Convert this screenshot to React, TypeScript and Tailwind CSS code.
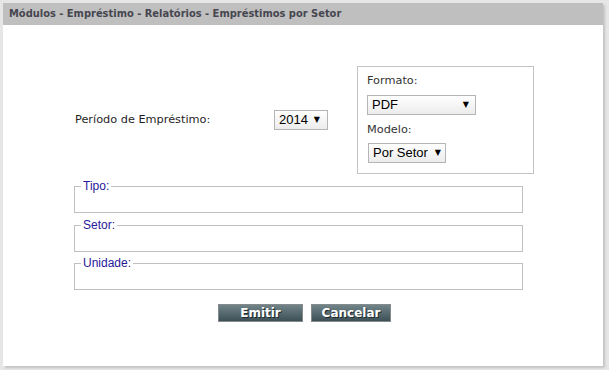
import React from "react";

const Arrow = () => (
  <span className="text-[8px] leading-none text-black" style={{ fontFamily: "'DejaVu Sans', sans-serif" }}>
    ▼
  </span>
);

function Select({ value, w, cls }: { value: string; w: string; cls?: string }) {
  return (
    <div
      className={`${w} h-[20px] border border-[#b5b5b5] bg-gradient-to-b from-white to-[#ececec] flex items-center justify-between pl-[4px] text-[13px] text-black ${cls ?? ""}`}
      style={{ fontFamily: "'Liberation Sans', Arial, sans-serif" }}
    >
      <span>{value}</span>
      <Arrow />
    </div>
  );
}

function Group({ label, cls }: { label: string; cls?: string }) {
  return (
    <fieldset className={`w-[449px] border border-[#c0c0c0] ml-[71px] ${cls ?? ""}`}>
      <legend
        className="ml-[6px] px-[2px] text-[12px] leading-[14px] text-[#26189a]"
        style={{ fontFamily: "'Liberation Sans', Arial, sans-serif" }}
      >
        {label}
      </legend>
      <div className="h-[19px]" />
    </fieldset>
  );
}

export default function App() {
  return (
    <div className="w-[609px] h-[370px] bg-[#e6e6e6] pt-[3px] pl-[3px]">
      <div className="w-[600px] h-[363px] bg-white shadow-[2px_2px_2px_#c4c4c4]">
        <div className="h-[22px] bg-[#bfbfbf] pl-[6px] flex items-center">
          <span
            className="text-[11px] font-bold text-[#464650]"
            style={{ fontFamily: "'DejaVu Sans', Tahoma, sans-serif", fontStretch: "condensed" }}
          >
            Módulos - Empréstimo - Relatórios - Empréstimos por Setor
          </span>
        </div>

        <div style={{ fontFamily: "'DejaVu Sans', Verdana, sans-serif" }}>
          <div className="mt-[41px] flex items-center pl-[72px]">
            <div className="w-[199px] text-[11.3px] text-[#1e1e1e]">Período de Empréstimo:</div>
            <Select value="2014" w="w-[54px]" cls="pr-[7px]" />
            <div className="ml-[29px] w-[177px] h-[108px] border border-[#c4c4c4] pl-[9px] pt-[6px]">
              <div className="text-[11.3px] leading-[16px] text-[#333]">Formato:</div>
              <Select value="PDF" w="w-[109px]" cls="mt-[6px] pr-[6px]" />
              <div className="mt-[7px] text-[11.3px] leading-[16px] text-[#333]">Modelo:</div>
              <Select value="Por Setor" w="w-[78px]" cls="mt-[5px] ml-[1px] pr-[4px]" />
            </div>
          </div>

          <Group label="Tipo:" cls="mt-[5px]" />
          <Group label="Setor:" cls="mt-[5px]" />
          <Group label="Unidade:" cls="mt-[4px]" />

          <div className="mt-[14px] flex justify-center gap-[8px] pl-[3px]">
            <button
              className="w-[85px] h-[18px] border border-[#858a8c] bg-gradient-to-b from-[#718488] to-[#3d5056] text-white text-[12px] font-bold leading-none [text-shadow:1px_1px_0_#1b2a2e]"
              style={{ fontFamily: "'DejaVu Sans', Verdana, sans-serif" }}
            >
              Emitir
            </button>
            <button
              className="w-[80px] h-[18px] border border-[#858a8c] bg-gradient-to-b from-[#718488] to-[#3d5056] text-white text-[12px] font-bold leading-none [text-shadow:1px_1px_0_#1b2a2e]"
              style={{ fontFamily: "'DejaVu Sans', Verdana, sans-serif" }}
            >
              Cancelar
            </button>
          </div>
        </div>
      </div>
    </div>
  );
}
